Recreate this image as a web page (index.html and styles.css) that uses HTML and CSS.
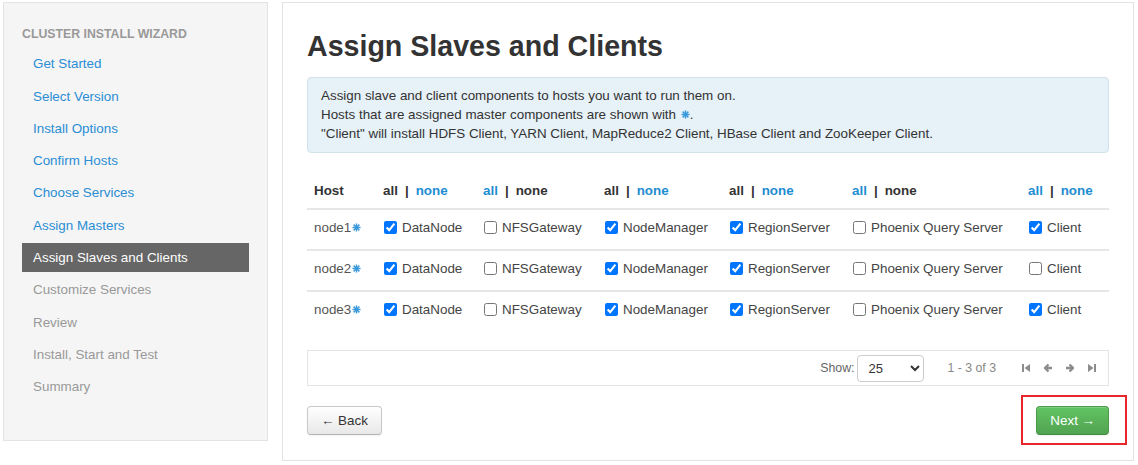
FILE: index.html
```html
<!DOCTYPE html>
<html>
<head>
<meta charset="utf-8">
<title>Assign Slaves and Clients</title>
<link rel="stylesheet" href="styles.css">
</head>
<body>
<div class="layout">
  <aside class="sidebar">
    <div class="sidebar-title">CLUSTER INSTALL WIZARD</div>
    <nav class="nav">
      <a class="nav-item done">Get Started</a>
      <a class="nav-item done">Select Version</a>
      <a class="nav-item done">Install Options</a>
      <a class="nav-item done">Confirm Hosts</a>
      <a class="nav-item done">Choose Services</a>
      <a class="nav-item done">Assign Masters</a>
      <a class="nav-item active">Assign Slaves and Clients</a>
      <a class="nav-item disabled">Customize Services</a>
      <a class="nav-item disabled">Review</a>
      <a class="nav-item disabled">Install, Start and Test</a>
      <a class="nav-item disabled">Summary</a>
    </nav>
  </aside>

  <main class="main">
    <h1 class="title">Assign Slaves and Clients</h1>
    <div class="alert">
      Assign slave and client components to hosts you want to run them on.<br>
      Hosts that are assigned master components are shown with <svg class="star" viewBox="0 0 10 10"><g><line x1="5" y1="0.5" x2="5" y2="9.5"/><line x1="0.5" y1="5" x2="9.5" y2="5"/><line x1="1.8" y1="1.8" x2="8.2" y2="8.2"/><line x1="8.2" y1="1.8" x2="1.8" y2="8.2"/></g></svg>.<br>
      "Client" will install HDFS Client, YARN Client, MapReduce2 Client, HBase Client and ZooKeeper Client.
    </div>

    <table class="hosts">
      <colgroup>
        <col class="c-host"><col class="c-dn"><col class="c-nfs"><col class="c-nm"><col class="c-rs"><col class="c-pqs"><col class="c-cl">
      </colgroup>
      <thead>
        <tr>
          <th>Host</th>
          <th><span class="sel">all</span><span class="pipe">|</span><a class="lnk">none</a></th>
          <th><a class="lnk">all</a><span class="pipe">|</span><span class="sel">none</span></th>
          <th><span class="sel">all</span><span class="pipe">|</span><a class="lnk">none</a></th>
          <th><span class="sel">all</span><span class="pipe">|</span><a class="lnk">none</a></th>
          <th><a class="lnk">all</a><span class="pipe">|</span><span class="sel">none</span></th>
          <th><a class="lnk">all</a><span class="pipe">|</span><a class="lnk">none</a></th>
        </tr>
      </thead>
      <tbody>
        <tr>
          <td class="host">node1<svg class="star" viewBox="0 0 10 10"><g><line x1="5" y1="0.5" x2="5" y2="9.5"/><line x1="0.5" y1="5" x2="9.5" y2="5"/><line x1="1.8" y1="1.8" x2="8.2" y2="8.2"/><line x1="8.2" y1="1.8" x2="1.8" y2="8.2"/></g></svg></td>
          <td><label class="cb"><input type="checkbox" checked>DataNode</label></td>
          <td><label class="cb"><input type="checkbox">NFSGateway</label></td>
          <td><label class="cb"><input type="checkbox" checked>NodeManager</label></td>
          <td><label class="cb"><input type="checkbox" checked>RegionServer</label></td>
          <td><label class="cb"><input type="checkbox">Phoenix Query Server</label></td>
          <td><label class="cb"><input type="checkbox" checked>Client</label></td>
        </tr>
        <tr>
          <td class="host">node2<svg class="star" viewBox="0 0 10 10"><g><line x1="5" y1="0.5" x2="5" y2="9.5"/><line x1="0.5" y1="5" x2="9.5" y2="5"/><line x1="1.8" y1="1.8" x2="8.2" y2="8.2"/><line x1="8.2" y1="1.8" x2="1.8" y2="8.2"/></g></svg></td>
          <td><label class="cb"><input type="checkbox" checked>DataNode</label></td>
          <td><label class="cb"><input type="checkbox">NFSGateway</label></td>
          <td><label class="cb"><input type="checkbox" checked>NodeManager</label></td>
          <td><label class="cb"><input type="checkbox" checked>RegionServer</label></td>
          <td><label class="cb"><input type="checkbox">Phoenix Query Server</label></td>
          <td><label class="cb"><input type="checkbox">Client</label></td>
        </tr>
        <tr>
          <td class="host">node3<svg class="star" viewBox="0 0 10 10"><g><line x1="5" y1="0.5" x2="5" y2="9.5"/><line x1="0.5" y1="5" x2="9.5" y2="5"/><line x1="1.8" y1="1.8" x2="8.2" y2="8.2"/><line x1="8.2" y1="1.8" x2="1.8" y2="8.2"/></g></svg></td>
          <td><label class="cb"><input type="checkbox" checked>DataNode</label></td>
          <td><label class="cb"><input type="checkbox">NFSGateway</label></td>
          <td><label class="cb"><input type="checkbox" checked>NodeManager</label></td>
          <td><label class="cb"><input type="checkbox" checked>RegionServer</label></td>
          <td><label class="cb"><input type="checkbox">Phoenix Query Server</label></td>
          <td><label class="cb"><input type="checkbox" checked>Client</label></td>
        </tr>
      </tbody>
    </table>

    <div class="pager">
      <span class="show">Show:</span>
      <select class="page-size"><option>25</option><option>50</option><option>100</option></select>
      <span class="range">1 - 3 of 3</span>
      <span class="pg-icons">
        <svg class="pg" viewBox="0 0 8 10"><rect x="0" y="1" width="2" height="8"/><path d="M8 1 L2.5 5 L8 9 Z"/></svg>
        <svg class="pg" viewBox="0 0 8 10"><path class="arr" d="M4.5 1.5 L1 5 L4.5 8.5 M1 5 H8"/></svg>
        <svg class="pg" viewBox="0 0 8 10"><path class="arr" d="M3.5 1.5 L7 5 L3.5 8.5 M7 5 H0"/></svg>
        <svg class="pg" viewBox="0 0 8 10"><path d="M0 1 L5.5 5 L0 9 Z"/><rect x="6" y="1" width="2" height="8"/></svg>
      </span>
    </div>

    <div class="actions">
      <button class="btn">&larr; Back</button>
      <span class="highlight">
        <button class="btn btn-success">Next &rarr;</button>
      </span>
    </div>
  </main>
</div>
</body>
</html>
```

FILE: styles.css
```css
body {
  margin: 0;
  padding: 2px 0 0 3px;
  font-family: "Liberation Sans", Arial, sans-serif;
  font-size: 13.4px;
  color: #333;
  background: #fff;
}

.layout {
  display: flex;
  align-items: flex-start;
  gap: 14px;
}

/* Sidebar */
.sidebar {
  width: 265px;
  height: 439px;
  box-sizing: border-box;
  background: #f5f5f5;
  border: 1px solid #e3e3e3;
  padding: 23px 18px 0 18px;
}

.sidebar-title {
  font-size: 12.3px;
  font-weight: bold;
  color: #999;
  line-height: 16px;
}

.nav {
  display: flex;
  flex-direction: column;
  margin-top: 4px;
}

.nav-item {
  display: block;
  height: 29px;
  line-height: 29px;
  padding-left: 11px;
  margin-top: 3.3px;
  white-space: nowrap;
}

.nav-item.done { color: #2a8dd4; }
.nav-item.disabled { color: #999; }
.nav-item.active {
  background: #666;
  color: #fff;
}

/* Main panel */
.main {
  width: 852px;
  height: 459px;
  box-sizing: border-box;
  border: 1px solid #e3e3e3;
  padding: 26px 24px 0 24px;
}

.title {
  margin: 0;
  font-size: 28.6px;
  line-height: 34px;
  font-weight: bold;
  color: #333;
}

.alert {
  margin-top: 14px;
  padding: 8px 13px 9px;
  background: #e6f1f8;
  border: 1px solid #d2e2ec;
  border-radius: 4px;
  line-height: 19px;
  color: #333;
}

.star {
  width: 9px;
  height: 9px;
  vertical-align: 0px;
  margin-left: 1px;
  stroke: #3a9ad9;
  stroke-width: 1.6;
  fill: none;
}

/* Table */
.hosts {
  margin-top: 18px;
  width: 802px;
  border-collapse: collapse;
  table-layout: fixed;
}

.c-host { width: 69px; }
.c-dn { width: 100px; }
.c-nfs { width: 121px; }
.c-nm { width: 125px; }
.c-rs { width: 123px; }
.c-pqs { width: 176px; }
.c-cl { width: 88px; }

.hosts th {
  text-align: left;
  font-weight: bold;
  color: #333;
  line-height: 19px;
  padding: 9.5px 7px 8.5px;
  border-bottom: 2px solid #e6e6e6;
  white-space: nowrap;
}

.hosts td {
  line-height: 19px;
  height: 19px;
  padding: 8px 7px 12px;
  color: #444;
  white-space: nowrap;
  vertical-align: top;
}

.hosts tbody tr + tr td {
  border-top: 2px solid #e6e6e6;
}

.hosts td.host { color: #555; }

.lnk { color: #1e8dd2; }
.sel { color: #333; }
.pipe { margin: 0 7px; color: #333; }

.cb {
  display: flex;
  align-items: center;
  height: 19px;
}

.cb input {
  width: 13px;
  height: 13px;
  margin: 0 5px 0 1px;
  flex: none;
}

/* Pager */
.pager {
  margin-top: 19px;
  height: 36px;
  box-sizing: border-box;
  border: 1px solid #e5e5e5;
  display: flex;
  align-items: center;
  justify-content: flex-end;
  padding-right: 12px;
  font-size: 12.3px;
}

.show { color: #666; }

.page-size {
  margin-left: 3px;
  width: 67px;
  height: 27px;
  border: 1px solid #ccc;
  border-radius: 4px;
  background: #fff;
  font-family: "Liberation Sans", Arial, sans-serif;
  font-size: 13px;
  color: #333;
  padding-left: 6px;
}

.range {
  margin-left: 23px;
  color: #888;
}

.pg-icons {
  display: flex;
  gap: 14px;
  margin-left: 26px;
}

.pg {
  width: 8px;
  height: 10px;
  fill: #8c8c8c;
}

.pg .arr {
  fill: none;
  stroke: #8c8c8c;
  stroke-width: 2.3;
  stroke-linejoin: miter;
}

/* Actions */
.actions {
  margin-top: 20px;
  display: flex;
  justify-content: space-between;
  align-items: center;
}

.btn {
  height: 29px;
  padding: 0 13px;
  font-family: "Liberation Sans", Arial, sans-serif;
  font-size: 13.4px;
  color: #333;
  background: linear-gradient(#ffffff, #e8e8e8);
  border: 1px solid #c8c8c8;
  border-bottom-color: #b3b3b3;
  border-radius: 4px;
  box-shadow: inset 0 1px 0 rgba(255,255,255,.2), 0 1px 2px rgba(0,0,0,.05);
}

.btn-success {
  color: #fff;
  background: linear-gradient(#62c462, #51a351);
  border-color: #4a9a4a #4a9a4a #3f8a3f;
  padding: 0 13px;
}

.highlight {
  position: relative;
  display: inline-block;
}

.highlight::after {
  content: "";
  position: absolute;
  left: -15px;
  right: -18px;
  top: -11px;
  bottom: -10px;
  border: 2px solid #e8262c;
  pointer-events: none;
}
```
